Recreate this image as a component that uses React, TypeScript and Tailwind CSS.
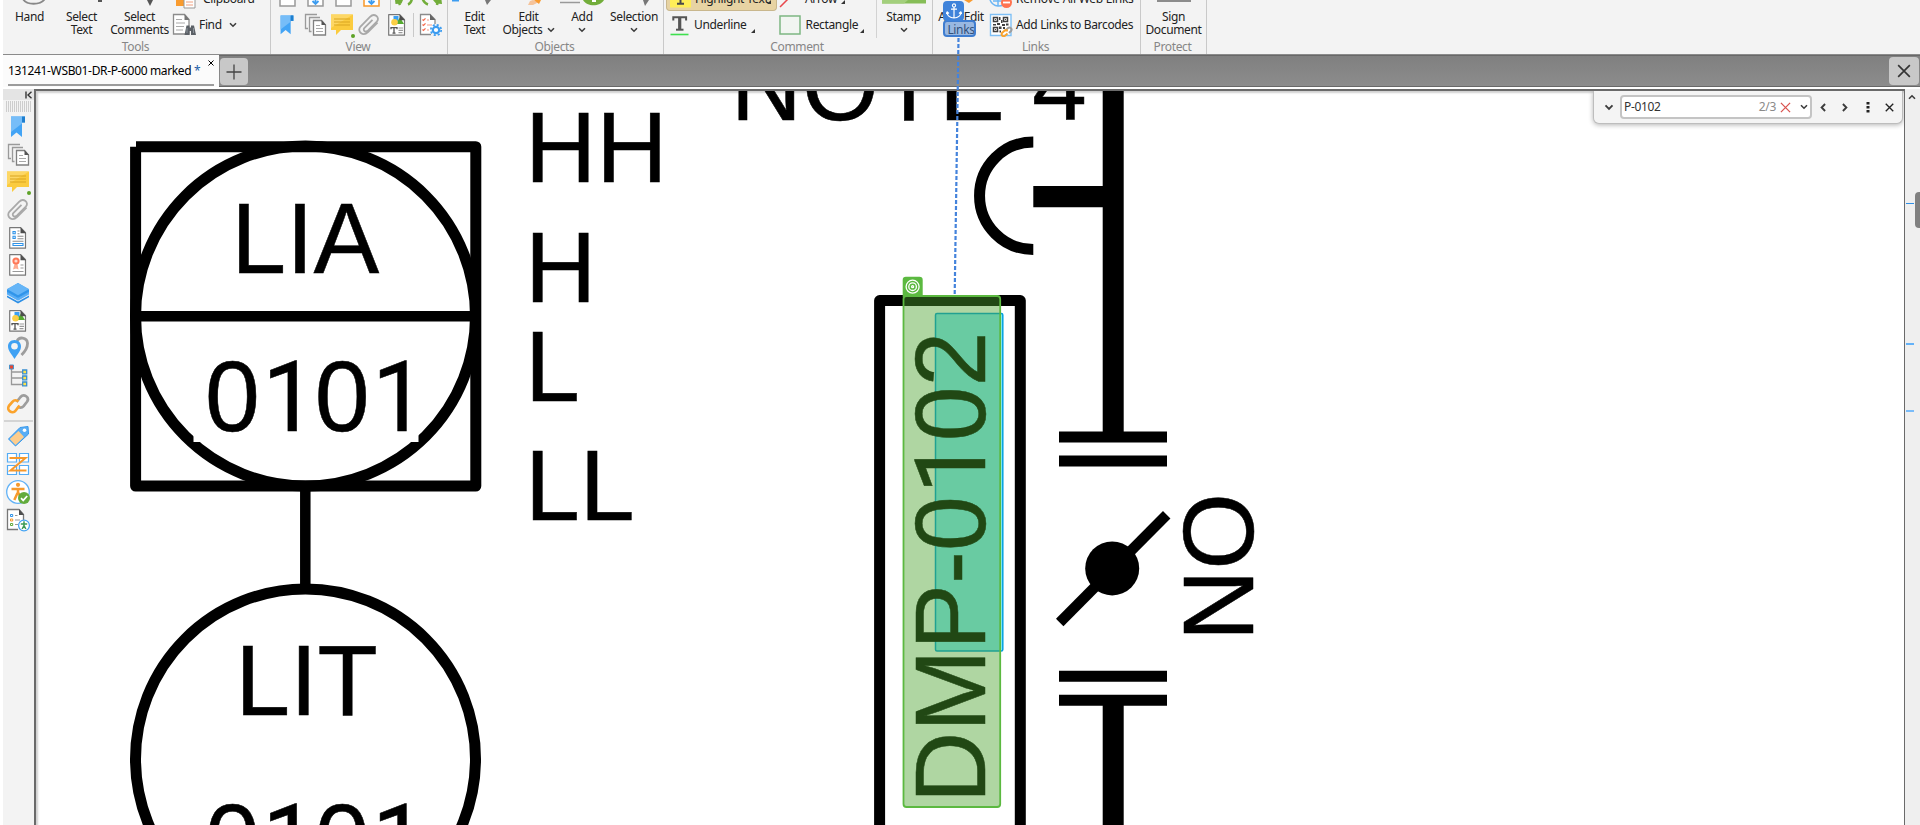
import type { ReactNode } from "react";

type IconProps = { className?: string };

const Svg = ({ children, className = "size-6", box = "0 0 24 24" }: { children: ReactNode; className?: string; box?: string }) => (
  <svg viewBox={box} fill="none" className={`shrink-0 ${className}`}>
    {children}
  </svg>
);

const Bookmark = ({ className }: IconProps) => (
  <Svg className={className}>
    <path d="M5 1.500h14v6h-3v14.500l-5.500-4.500L5 22z" fill="#43a4f5" />
    <path d="M5 1.500h11v7L5 17z" fill="#76bdf8" />
    <path d="M16 1.500h3v6h-3z" fill="#1f7fce" />
  </Svg>
);
const Pages = ({ className }: IconProps) => (
  <Svg className={className}>
    <path d="M5 15.500H2.500V1.500H14M8.500 18.500h-2V4.500H17" stroke="#9a9a9a" strokeWidth="1.300" />
    <path d="M10.500 7.500h8l4 4.500v10h-12z" fill="#fff" stroke="#808080" strokeWidth="1.300" />
    <path d="M18.500 7v5H23z" fill="#555" />
    <path d="M13 12.500h4M13 15.500h7M13 18.500h7" stroke="#a8a8a8" strokeWidth="1.200" />
  </Svg>
);
const Comment = ({ className }: IconProps) => (
  <Svg className={className}>
    <path d="M1 1.500h22v15.500h-12L6 22v-5H1z" fill="#fbcb3e" />
    <path d="M1 1.500h22L1 15z" fill="#fdd765" />
    <path d="M4 6h16M4 9h16M4 12h16" stroke="#d9a520" strokeWidth="1.100" />
  </Svg>
);
const Clip = ({ className }: IconProps) => (
  <Svg className={className}>
    <path d="M20.500 9.500l-9.500 9.500c-5 5-11.500-.5-7.500-5.500L13 3.800c4.500-4.300 10.500.7 6.800 4.900l-8.700 8.800c-2.800 2.600-5.800-.4-3.600-2.700l8-8" stroke="#a9a9a9" strokeWidth="1.800" />
  </Svg>
);
const Doc = ({ children, className }: { children: ReactNode; className?: string }) => (
  <Svg className={className}>
    <path d="M3.700 1.700h11l4.800 5v15.500h-15.800z" fill="#fff" stroke="#777" strokeWidth="1.200" strokeLinejoin="round" />
    {children}
    <path d="M14.500 1.200v6H20z" fill="#4e4e4e" />
  </Svg>
);
const Fields = ({ className }: IconProps) => (
  <Doc className={className}>
    <path d="M7 5.500h2.200v2.200H7zM7 10.300h2.200v2.200H7zM7 17.500h10v2h-10z" stroke="#2f93e8" strokeWidth="1.100" />
    <path d="M11.500 5h2M11.500 7.700h2M11.500 10.300h6M11.500 12.800h6M6.500 15.200h11" stroke="#8d8d8d" strokeWidth="1.100" />
  </Doc>
);
const Certificate = ({ className }: IconProps) => (
  <Doc className={className}>
    <path d="M8.500 11l-1.500 5.500 3-1 2.500 1-1-5.500" fill="#ffab91" />
    <circle cx="10" cy="8" r="3.600" fill="#ff7757" />
    <circle cx="10" cy="8" r="1.600" fill="#ffd8cd" />
    <path d="M14.500 12h3M14.500 15h3M6.500 18.500h11" stroke="#999" strokeWidth="1.100" />
  </Doc>
);
const TextShapes = ({ className }: IconProps) => (
  <Doc className={className}>
    <path d="M8.500 3h5v5H8.500z" fill="#3aa0f3" />
    <path d="M10.500 11l4.500-6.500 4 6.500z" fill="#55aa30" />
    <circle cx="9.500" cy="9.300" r="3.300" fill="#fccf45" />
    <path d="M6 16.200v-1.500h6v1.500M9 15v5M7.500 20.200h3" stroke="#555" strokeWidth="1.300" />
    <path d="M13.500 15h4.500M13.500 17.300h4.500M13.500 19.700h4" stroke="#999" strokeWidth="1.200" />
  </Doc>
);
const Layers = ({ className }: IconProps) => (
  <Svg className={className}>
    <path d="M1 14.500l11 6 11-6v1.700L12 22.500 1 16.200z" fill="#2b8ee6" />
    <path d="M1 10.500l11 6 11-6v3L12 19.700 1 13.500z" fill="#58aef7" />
    <path d="M12 2l11 6.500v2.500L12 17 1 11V8.500z" fill="#3095ea" />
    <path d="M12 2l11 6-11 6.200L1 8z" fill="#65b5f7" />
  </Svg>
);
const Pins = ({ className }: IconProps) => (
  <Svg className={className}>
    <path d="M11 5c2-4.500 10-4 10.500 2 .2 4-2.500 8.500-6 12" stroke="#9d9d9d" strokeWidth="2.800" />
    <path d="M8.500 4C4.500 4 2 7 2 10.300 2 15 5.500 18 8.500 23 11.500 18 15 15 15 10.300 15 7 12.500 4 8.500 4z" fill="#3fa1f3" />
    <circle cx="8.500" cy="10.200" r="3.300" fill="#f4f4f4" />
  </Svg>
);
const Tree = ({ className }: IconProps) => (
  <Svg className={className}>
    <path d="M5.500 5v15.500H17M5.500 8H17M5.500 14H17" stroke="#999" strokeWidth="1.300" />
    <path d="M3.500 1h4v4h-4z" fill="#e8472f" stroke="#4a90c8" />
    <path d="M16.700 6h4v3.800h-4zM16.700 12h4v3.800h-4zM16.700 18h4v3.800h-4z" fill="#ffe14b" stroke="#3a8fd0" strokeWidth="1.300" />
  </Svg>
);
const Chain = ({ className }: IconProps) => (
  <Svg className={className}>
    <path d="M10.500 10l4-5c3.500-4 9.500.5 6.500 4.800l-3.400 4.300c-2 2.400-4.500 1.800-6 .2" stroke="#9d9d9d" strokeWidth="2.700" />
    <path d="M13.500 13.500l-4 5.200c-3 4-9.500-.5-6.600-4.800l3.500-4.100c2-2.300 4.200-1.800 5.900-.2" stroke="#fba32c" strokeWidth="2.700" />
  </Svg>
);
const Tag = ({ className }: IconProps) => (
  <Svg className={className}>
    <path d="M14 3.500l8-1 .5 7.500L9.500 22 2.500 15z" fill="#5aaef5" stroke="#3698ec" strokeLinejoin="round" />
    <path d="M12.500 7l5.500 6-8.500 8L3.700 15z" fill="#fdcd8d" />
    <circle cx="18.500" cy="6.300" r="1.800" fill="#fff" />
  </Svg>
);
const Order = ({ className }: IconProps) => (
  <Svg className={className}>
    <path d="M1.500 1.500h9v8.500h-9zM13.500 1.500h9v8.500h-9zM1.500 13.500h9v9h-9zM13.500 13.500h9v9h-9z" fill="#fff" stroke="#55acf5" strokeWidth="1.200" />
    <path d="M3.500 6h16L4.500 18.500h16" stroke="#f7982a" strokeWidth="2" />
  </Svg>
);
const Accessibility = ({ className }: IconProps) => (
  <Svg className={className}>
    <circle cx="12" cy="12" r="11.300" fill="#fff" stroke="#62b2f6" strokeWidth="1.300" />
    <circle cx="12" cy="4.800" r="2.100" fill="#f79a2c" />
    <path d="M5.500 9h13M12 9v5M11.500 13l-3.200 7M12.500 13l3 6" stroke="#f79a2c" strokeWidth="2.500" />
    <circle cx="18" cy="18" r="6" fill="#62ab3c" />
    <path d="M15 18.200l2.200 2.200 4-4.400" stroke="#fff" strokeWidth="1.700" />
  </Svg>
);
const Report = ({ className }: IconProps) => (
  <Svg className={className}>
    <path d="M12 21.500H1.500v-20H13l4.500 5V12" fill="#fff" stroke="#777" strokeWidth="1.300" />
    <path d="M13 1v6h5z" fill="#4e4e4e" />
    <path d="M4.500 6.500h2.200v2H4.500z" stroke="#2f93e8" />
    <path d="M4.500 11h2.200v2H4.500z" stroke="#f7982a" />
    <path d="M4.500 15.500h2.200v2H4.500z" stroke="#62ab3c" />
    <path d="M9 7.500h2.500M9 12h5M9 16.500h3" stroke="#999" strokeWidth="1.200" />
    <circle cx="18" cy="17.500" r="5.400" fill="#fff" stroke="#3fa1f3" strokeWidth="1.200" />
    <path d="M14.800 16h6.400M18 13.300v5.200M18 17.500l-1.800 3.500M18 17.500l1.800 3.500" stroke="#3e9a55" strokeWidth="1.500" />
  </Svg>
);
const FindIcon = () => (
  <Svg>
    <path d="M1.500 1.500h11l4.500 5V21H1.500z" fill="#fff" stroke="#8b8b8b" strokeWidth="1.300" />
    <path d="M12.500 1v6h5z" fill="#777" />
    <path d="M4 6.500h6M4 10h9M4 13.500h8M4 17h7" stroke="#aaa" strokeWidth="1.200" />
    <path d="M14.500 12.500h3v2h1.500v-2h3l2 9.500h-5v-4h-1.500v4h-5z" fill="#5b6066" />
    <path d="M15 15v5M21.500 15v5" stroke="#8b9299" />
  </Svg>
);
const TasksIcon = () => (
  <Svg>
    <path d="M13 21.500H2.500v-20H12l5 5V11" fill="#fff" stroke="#8b8b8b" strokeWidth="1.300" />
    <path d="M12 1v6h5.500z" fill="#666" />
    <path d="M4.500 6.500l1 1 2-2.200M4.500 11.500l1 1 2-2.200M4.500 16.500l1 1 2-2.200" stroke="#f4694b" strokeWidth="1.200" />
    <path d="M9 7h2M9 12h5M9 17h2" stroke="#f19a86" strokeWidth="1.200" />
    <circle cx="18" cy="17" r="3.200" fill="#fff" stroke="#3c9cf0" strokeWidth="2.200" />
    <circle cx="18" cy="17" r="5.200" stroke="#3c9cf0" strokeWidth="1.700" strokeDasharray="2.100 2" />
  </Svg>
);
const BarcodeIcon = () => (
  <Svg>
    <path d="M1.500 1.500h20.500v21H1.500z" fill="#fff" stroke="#7fc0f5" strokeWidth="1.400" />
    <path d="M4.500 4.500h4v4h-4zM14.500 4.500h4v4h-4zM4.500 14.500h4v4h-4z" stroke="#3f3f3f" strokeWidth="1.500" />
    <path d="M6 6h1v1H6zM16 6h1v1h-1zM6 16h1v1H6zM10 4h1.500v3H10zM12 7h1.500v3H12zM4 11h3v1.500H4zM8 10h3v2H8zM13 11h3v2h-3zM17 10.500h2.500v2H17zM10 13.500h2.500v2.500H10zM14 14h2v2h-2zM10.500 17.500H12v2h-1.500z" fill="#3f3f3f" />
    <path d="M16.500 17.500l2.500-2.500c2-1.500 4.700 1 3 3l-2 2" stroke="#9d9d9d" strokeWidth="2" />
    <path d="M19 17.500l-3-.2-3 2.700c-1.300 2.200 1.200 4 3 2.700l2.500-2.200" stroke="#fba32c" strokeWidth="2" />
  </Svg>
);

const Chevron = ({ className = "w-2 h-1.5", turn = "" }: { className?: string; turn?: string }) => (
  <Svg box="0 0 8 6" className={`${className} ${turn}`}>
    <path d="M1 1.200l3 3 3-3" stroke="#3c3c3c" strokeWidth="1.600" />
  </Svg>
);
const Cross = ({ className, weight = 1.4 }: IconProps & { weight?: number }) => (
  <Svg box="0 0 12 12" className={className}>
    <path d="M1 1l10 10M11 1L1 11" stroke="currentColor" strokeWidth={weight} />
  </Svg>
);
const Corner = () => (
  <Svg box="0 0 4 4" className="size-1">
    <path d="M4 0v4H0z" fill="#333" />
  </Svg>
);

function Group({ label, width, children }: { label: string; width: string; children: ReactNode }) {
  return (
    <section className={`flex h-[55px] shrink-0 flex-col border-r border-[#c9c9c9] ${width}`}>
      <div className="flex h-[39px] overflow-hidden leading-[15px]">{children}</div>
      <div className="pr-[2px] text-center leading-[15px] text-[#868686]">{label}</div>
    </section>
  );
}

function BigButton({ width, lines, chevron, children }: { width: string; lines: string[]; chevron?: "side" | "below"; children?: ReactNode }) {
  return (
    <div className={`flex shrink-0 flex-col items-center text-center leading-[13px] ${width}`}>
      <div className="flex h-[10px] w-full justify-center overflow-hidden">{children}</div>
      {lines.map((line, i) => (
        <div key={line} className="flex items-center gap-1 whitespace-nowrap">
          {line}
          {chevron === "side" && i === lines.length - 1 && <Chevron />}
        </div>
      ))}
      {chevron === "below" && <Chevron className="mt-1 h-1.5 w-2" />}
    </div>
  );
}

const CutSheet = ({ frame, arrow }: { frame: string; arrow?: boolean }) => (
  <Svg box="0 0 20 8" className="h-2 w-5">
    <path d="M2 -2V6h15v-8" fill="#fff" stroke={frame} strokeWidth="1.500" />
    {arrow && <path d="M6.500 1l3 3 3-3M9.500 4V-2" stroke="#3c9cf0" strokeWidth="1.800" />}
  </Svg>
);

function Ribbon() {
  return (
    <div className="flex h-[55px] shrink-0 overflow-hidden border-b border-[#8a8a8a] bg-[#f3f3f3]">
      <Group label="Tools" width="w-[268px]">
        <BigButton width="w-[53px]" lines={["Hand"]}>
          <Svg box="0 0 24 8" className="ml-2 h-2 w-6">
            <path d="M0 -3C3 6 20 6 24 -3" stroke="#888" strokeWidth="1.800" />
          </Svg>
        </BigButton>
        <BigButton width="w-[51px]" lines={["Select", "Text"]}>
          <Svg box="0 0 8 8" className="ml-9 size-2">
            <path d="M2 0h4v2H2z" fill="#555" />
          </Svg>
        </BigButton>
        <BigButton width="w-[65px]" lines={["Select", "Comments"]}>
          <Svg box="0 0 10 8" className="ml-5 h-2 w-2.5">
            <path d="M2 0h6L5 6z" fill="#555" />
          </Svg>
        </BigButton>
        <div className="flex flex-col pl-1">
          <div className="flex h-[13px] items-start gap-[7px]">
            <Svg box="0 0 20 9" className="h-[9px] w-5">
              <path d="M0 0h9v6H0z" fill="#f99b2f" />
              <path d="M8 0v8h11V0" fill="#fff" stroke="#999" />
              <path d="M10 2h7M10 5h7" stroke="#f0a080" />
            </Svg>
            <span className="-mt-[9px]">Clipboard</span>
          </div>
          <div className="-ml-1 flex h-6 items-center gap-[3px]">
            <FindIcon />
            <span className="-mt-[2px]">Find</span>
            <Chevron className="-mt-px ml-1 h-1.5 w-2" />
          </div>
        </div>
      </Group>

      <Group label="View" width="w-[177px]">
        <div className="flex flex-col pl-[3px]">
          <div className="flex h-[13px] items-start gap-2 pl-1">
            <CutSheet frame="#999" />
            <CutSheet frame="#999" arrow />
            <CutSheet frame="#999" />
            <CutSheet frame="#f7982a" arrow />
            <Svg box="0 0 54 10" className="h-2.5 w-[54px]">
              <path d="M0.500 0v10" stroke="#c9c9c9" />
              <path d="M5 0h8l-1.500 3.500-6 .5zM43 0h8.500l.5 4-6-.5z" fill="#72ad3a" />
              <path d="M18 4.500c2.500-1 3.500-3 4-6M38 4.500c-3-1-4.500-3-5.500-6M8 0l2 5M48 0l-1 5" stroke="#72ad3a" strokeWidth="2.500" />
            </Svg>
          </div>
          <div className="flex h-6 items-center pl-px">
            <Bookmark className="h-[22px] w-6" />
            <Pages className="ml-1 size-6" />
            <div className="relative ml-[3px]">
              <Comment className="size-6" />
              <span className="absolute right-[-1px] bottom-[-1px] size-1 rounded-full bg-[#5da226]" />
            </div>
            <Clip className="ml-[3px] size-6" />
            <TextShapes className="ml-1 size-6" />
            <span className="mx-1 h-6 w-px bg-[#c9c9c9]" />
            <TasksIcon />
          </div>
        </div>
      </Group>

      <Group label="Objects" width="w-[216px]">
        <BigButton width="w-[53px]" lines={["Edit", "Text"]}>
          <Svg box="0 0 54 8" className="h-2 w-[54px]">
            <path d="M4 0h7v1.500H4z" fill="#3c9cf0" />
            <path d="M37 0h6l-4 5z" fill="#777" />
          </Svg>
        </BigButton>
        <BigButton width="w-[55px]" lines={["Edit", "Objects"]} chevron="side">
          <Svg box="0 0 16 8" className="ml-3 h-2 w-4">
            <path d="M3 1l3-1 6 2-6 3H1z" fill="#f5c39a" />
            <path d="M7 0h7l-2 4z" fill="#f99b2f" />
          </Svg>
        </BigButton>
        <BigButton width="w-[52px]" lines={["Add"]} chevron="below">
          <Svg box="0 0 52 8" className="h-2 w-[52px]">
            <path d="M4 2.500h20" stroke="#999" strokeWidth="1.500" />
            <path d="M27 0c4 7 17 7 21 0z" fill="#72ad3a" />
            <path d="M36 0h4v2h-4z" fill="#fff" />
          </Svg>
        </BigButton>
        <BigButton width="w-[52px]" lines={["Selection"]} chevron="below">
          <Svg box="0 0 10 8" className="ml-6 h-2 w-2.5">
            <path d="M2 0h6L4 6z" fill="#777" />
          </Svg>
        </BigButton>
      </Group>

      <Group label="Comment" width="w-[269px]">
        <div className="flex w-[212px] flex-col pl-[2px]">
          <div className="flex h-[13px] items-start">
            <div className="flex h-[11px] w-[111px] items-start rounded-b-sm border border-t-0 border-[#c9b78d] bg-[#e7d3a3] pl-[3px]">
              <Svg box="0 0 21 8" className="h-2 w-[21px]">
                <path d="M0 0h21v7.500H0z" fill="#ffee58" />
                <path d="M10.500 0v3.500M7 3.800h7" stroke="#4a4a4a" strokeWidth="2" />
              </Svg>
              <span className="-mt-[9px] ml-1 whitespace-nowrap">Highlight Text</span>
              <span className="-ml-px">
                <Corner />
              </span>
            </div>
            <div className="flex items-start pl-0.5">
              <Svg box="0 0 22 8" className="h-2 w-[22px]">
                <path d="M1 7L9 -1" stroke="#e8484d" strokeWidth="1.500" />
              </Svg>
              <span className="-mt-[9px] ml-1">Arrow</span>
              <span className="ml-1">
                <Corner />
              </span>
            </div>
          </div>
          <div className="flex h-6 items-center">
            <Svg box="0 0 20 22" className="ml-1 h-[22px] w-5">
              <path d="M3.300 6.500V3.300h12.800v3.200" stroke="#555" strokeWidth="2" />
              <path d="M9.700 3v12.500" stroke="#555" strokeWidth="3.200" />
              <path d="M6 15.700h7.500" stroke="#555" strokeWidth="2" />
              <path d="M0.500 20.500h18" stroke="#3fe04f" strokeWidth="1.600" />
            </Svg>
            <span className="-mt-[2px] ml-1">Underline</span>
            <span className="mt-3 ml-1">
              <Corner />
            </span>
            <Svg box="0 0 22 20" className="ml-6 h-5 w-[22px]">
              <path d="M1 1h20v18H1z" fill="#f1f5f1" stroke="#7db783" strokeWidth="1.500" />
            </Svg>
            <span className="-mt-[2px] ml-[5px]">Rectangle</span>
            <span className="mt-3 ml-[2px]">
              <Corner />
            </span>
          </div>
        </div>
        <span className="h-[38px] w-px bg-[#d2d2d2]" />
        <BigButton width="w-[53px]" lines={["Stamp"]} chevron="below">
          <Svg box="0 0 44 4" className="h-1 w-11">
            <path d="M0 0h44v3.500H0z" fill="#86bd57" />
            <path d="M0 0h26l-4 3.500H0z" fill="#a3cf7c" />
          </Svg>
        </BigButton>
      </Group>

      <Group label="Links" width="w-[208px]">
        <div className="relative flex">
          <BigButton width="w-[56px]" lines={["Add/Edit", "Links"]}>
            <Svg box="0 0 16 8" className="ml-4 h-2 w-4">
              <path d="M3 0h9l-4 3z" fill="#f99b2f" />
            </Svg>
          </BigButton>
          <span className="absolute top-5 left-[10px] h-[17px] w-[33px] rounded border-2 border-[#3f7dd0] bg-[#3f7dd0]/50" />
          <span className="absolute top-px left-[10px] flex h-5 w-[21px] items-center justify-center rounded bg-[#3f83da]">
            <Svg box="0 0 16 16" className="size-4">
              <circle cx="8" cy="2.500" r="1.600" stroke="#fff" strokeWidth="1.100" />
              <path d="M8 4.200V15M5 6.200h6M1 9.500c.5 3.500 3 5.300 7 5.500 4-.2 6.500-2 7-5.500M0 11l1.200-2 1.800 1.500M16 11l-1.200-2-1.800 1.500" stroke="#fff" strokeWidth="1.200" />
            </Svg>
          </span>
        </div>
        <div className="flex flex-col">
          <div className="flex h-[13px] items-start gap-1">
            <Svg box="0 0 24 9" className="h-[9px] w-6">
              <path d="M1 0c3 7 12 9 18 0M9 0v6M4 1h12" stroke="#6cb6f5" strokeWidth="1.500" />
              <circle cx="17.500" cy="2.500" r="5.500" fill="#ff7350" />
              <path d="M14 2.500h7" stroke="#fff" strokeWidth="1.800" />
            </Svg>
            <span className="-mt-[9px] -ml-px tracking-[-0.25px] whitespace-nowrap">Remove All Web Links</span>
          </div>
          <div className="flex h-6 items-center gap-[3px] whitespace-nowrap">
            <BarcodeIcon />
            <span className="-mt-[2px]">Add Links to Barcodes</span>
          </div>
        </div>
      </Group>

      <Group label="Protect" width="w-[66px]">
        <BigButton width="w-[65px]" lines={["Sign", "Document"]}>
          <span className="h-[2px] w-[34px] bg-[#8c8c8c]" />
        </BigButton>
      </Group>
    </div>
  );
}

function TabBar() {
  return (
    <div className="flex h-8 shrink-0 items-start bg-[#fbfbfb]">
      <div className="flex h-8 w-[216px] flex-col bg-[#fbfbfb] pr-[5px] pl-[5px]">
        <div className="flex h-[31px] items-center justify-between border-b-2 border-[#9b9b9b] pt-[3px] text-[12px] tracking-[-0.350px] text-black">
          <span className="whitespace-nowrap">
            131241-WSB01-DR-P-6000 marked <span className="text-[#1c5fa8]">*</span>
          </span>
          <Cross className="mb-4 size-[6px] text-black" weight={2} />
        </div>
      </div>
      <div className="flex h-8 flex-1 items-start justify-between border-t border-b border-[#686868] bg-linear-to-b from-[#808080] to-[#8c8c8c] pt-[2px]">
        <div className="ml-px flex h-[27px] w-[28px] items-center justify-center rounded-sm bg-[#c8c8c8]">
          <Svg box="0 0 16 16" className="size-4">
            <path d="M8 0.500v15M0.500 8h15" stroke="#444" strokeWidth="1.300" />
          </Svg>
        </div>
        <div className="-mt-px mr-px flex h-[28px] w-[30px] items-center justify-center rounded-sm bg-[#c8c8c8] text-[#333]">
          <Cross className="size-3.5" />
        </div>
      </div>
    </div>
  );
}

function SideBar() {
  const upper = [Bookmark, Pages, Comment, Clip, Fields, Certificate, Layers, TextShapes, Pins, Tree, Chain];
  const lower = [Tag, Order, Accessibility, Report];
  return (
    <aside className="flex w-[31px] shrink-0 flex-col bg-[#f3f3f3]">
      <div className="flex h-[11px] shrink-0 items-center justify-end bg-[#e4e4e4] pr-[2px]">
        <Svg box="0 0 7 8" className="h-2 w-[7px]">
          <path d="M1 0.500v7M6.500 0.800L3 4l3.500 3.200" stroke="#333" strokeWidth="1.400" />
        </Svg>
      </div>
      <div className="mt-[1px] mb-px ml-[3px] h-[11px] w-[26px] shrink-0 bg-[repeating-linear-gradient(90deg,#cdcdcd_0_1px,transparent_1px_2px)]" />
      {upper.map((Icon, i) => (
        <div key={i} className="flex h-[27.700px] shrink-0 items-center justify-center pr-px">
          <div className="relative">
            <Icon className="size-6" />
            {Icon === Comment && <span className="absolute right-[-1px] bottom-[-1px] size-1 rounded-full bg-[#5da226]" />}
          </div>
        </div>
      ))}
      <div className="mx-px mt-[2px] h-[2px] shrink-0 bg-[#d4d4d4]" />
      {lower.map((Icon, i) => (
        <div key={i} className="flex h-7 shrink-0 items-center justify-center pr-px">
          <Icon className="size-6" />
        </div>
      ))}
    </aside>
  );
}

type LabelProps = { x: number; y: number; children: string; rotated?: boolean };

/** Drawing annotation: plain numeral ones, tall capitals. */
function Label({ x, y, children, rotated }: LabelProps) {
  return (
    <text transform={`translate(${x} ${y})${rotated ? " rotate(-90)" : ""} scale(0.996 1.018)`}>
      {children.split(/(1)/).map((part, i) =>
        part === "1" ? (
          <tspan key={i} dx="2.500" className="font-['Roboto'] text-[97px]">
            1
          </tspan>
        ) : (
          <tspan key={i} dx={i > 0 ? "-1.900" : "0"}>
            {part}
          </tspan>
        ),
      )}
    </text>
  );
}

function Diagram() {
  return (
    <svg
      viewBox="36 91 1867 734"
      className="block h-[734px] w-[1867px] font-['Liberation_Sans',Arial,sans-serif] text-[99px] tracking-normal"
      stroke="#000"
      strokeWidth="11"
      fill="none"
    >
      <g>
        <path d="M136 146.700H475.800V486H135.600V146.700" strokeLinejoin="round" />
        <circle cx="305.500" cy="316" r="170" />
        <path d="M136 316.300H475" strokeWidth="10.500" />
        <path d="M193.500 380H418.500V442H193.500z" fill="#fff" stroke="none" />
        <path d="M305.300 486V588" strokeWidth="10.500" />
        <circle cx="305.500" cy="759" r="170" />
      </g>

      <g fill="#000" stroke="#000" strokeWidth="0.500">
        <Label x={231.3} y={272.5}>LIA</Label>
        <Label x={205} y={431}>0101</Label>
        <Label x={235.2} y={714.7}>LIT</Label>
        <Label x={205} y={873.5}>0101</Label>
        <Label x={525} y={181.7}>HH</Label>
        <Label x={525} y={302.3}>H</Label>
        <Label x={525} y={401}>L</Label>
        <Label x={525} y={520.4}>LL</Label>
        <Label x={730.8} y={120}>NOTE 4</Label>
        <Label x={1252.7} y={641} rotated>NO</Label>
      </g>

      <g>
        <path d="M1033.300 142A53.750 53.750 0 0 0 1033.300 249.500" />
        <path d="M1033.300 196.700H1105" strokeWidth="21.300" />
        <path d="M1113.200 80V437M1113.200 700V840" strokeWidth="21" />
        <path d="M1059 437H1167M1059 461H1167M1059 676.300H1167M1059 700.200H1167" />
        <path d="M1059.700 622.500L1166.700 514.700" strokeWidth="10.500" />
        <circle cx="1112.200" cy="568.400" r="27" fill="#000" stroke="none" />
      </g>

      <path d="M879.600 840V300.600H1020.300V840" strokeLinejoin="round" />
      <rect x="935.500" y="313.500" width="67.300" height="337.500" rx="1.500" fill="#82ebff" stroke="#00a0e1" strokeWidth="1.500" />
      <g fill="#000" stroke="#000" strokeWidth="0.500">
        <Label x={985.3} y={803} rotated>DMP-0102</Label>
      </g>
      <rect x="903.500" y="296" width="96.700" height="511" rx="3" fill="#4ba32e" fillOpacity="0.445" stroke="#5bb940" strokeWidth="1.800" />
      <path d="M902.700 297V280q0-3.200 3.200-3.200H919.500q3.200 0 3.200 3.200V296z" fill="#5bb940" stroke="none" />
      <g stroke="#fff" strokeWidth="1.300">
        <circle cx="912.600" cy="286.700" r="6.500" />
        <circle cx="912.600" cy="286.700" r="3.800" />
        <circle cx="912.600" cy="286.700" r="1" />
      </g>
    </svg>
  );
}

function SearchPanel() {
  return (
    <div className="absolute top-0 right-[1px] flex h-[33px] w-[310px] items-center rounded-b-md border border-t-0 border-[#bdbdbd] bg-[#f4f4f4] pl-[10px] shadow-[0_1px_5px_rgba(0,0,0,0.3)]">
      <Chevron className="h-[7px] w-[10px]" />
      <div className="ml-[6px] flex h-6 w-[192px] items-center rounded-sm border-2 border-[#c4c4c4] bg-white pl-[2px] text-[#333]">
        <span>P-0102</span>
        <span className="ml-auto text-[#8a8a8a]">2/3</span>
        <Cross className="ml-1 size-[11px] text-[#d9534f]" />
        <Chevron className="mr-[2px] ml-[9px] h-1.5 w-2" />
      </div>
      <Chevron className="ml-[6px] h-[7px] w-[10px]" turn="rotate-90" />
      <Chevron className="ml-[12px] h-[7px] w-[10px]" turn="-rotate-90" />
      <Svg box="0 0 4 12" className="ml-[16px] h-3 w-1">
        <path d="M.5 1h3v2.500h-3zM.5 5h3v2.500h-3zM.5 9h3v2.500h-3z" fill="#222" />
      </Svg>
      <Cross className="ml-[15px] size-[9px] text-[#222]" weight={1.8} />
    </div>
  );
}

function ScrollStrip() {
  return (
    <div className="flex w-[16px] shrink-0 flex-col border-l border-[#6a6a6a] bg-[#efefef]">
      <div className="flex h-4 items-center pl-[3px]">
        <Chevron turn="rotate-180" />
      </div>
      <div className="relative flex-1">
        <span className="absolute top-[98px] left-[1px] h-px w-2 bg-[#2f8fe6]" />
        <span className="absolute top-[238px] left-[1px] h-[2px] w-2 bg-[#64b2f8]" />
        <span className="absolute top-[305px] left-[1px] h-[2px] w-2 bg-[#7abcf9]" />
        <span className="absolute top-[87px] right-0 h-9 w-[5px] rounded-l-sm bg-[#808080]" />
      </div>
    </div>
  );
}

export default function App() {
  return (
    <div className="relative flex h-[825px] w-[1920px] flex-col overflow-hidden bg-white pl-[3px] font-['Noto_Sans','Open_Sans',sans-serif] text-[12px] tracking-[-0.35px] text-[#222]">
      <Ribbon />
      <TabBar />
      <div className="flex min-h-0 flex-1 pt-[2px]">
        <SideBar />
        <main className="relative flex-1 overflow-hidden border-t-[2px] border-l-2 border-[#6a6a6a] bg-white shadow-[inset_2px_2px_2px_#d0d0d0]">
          <Diagram />
          <SearchPanel />
        </main>
        <ScrollStrip />
      </div>
      <svg viewBox="0 0 12 260" className="absolute top-9 left-[950px] h-[260px] w-3">
        <path d="M8.500 2L4.700 258" stroke="#4483dc" strokeWidth="2.200" strokeDasharray="4 2" />
      </svg>
    </div>
  );
}
